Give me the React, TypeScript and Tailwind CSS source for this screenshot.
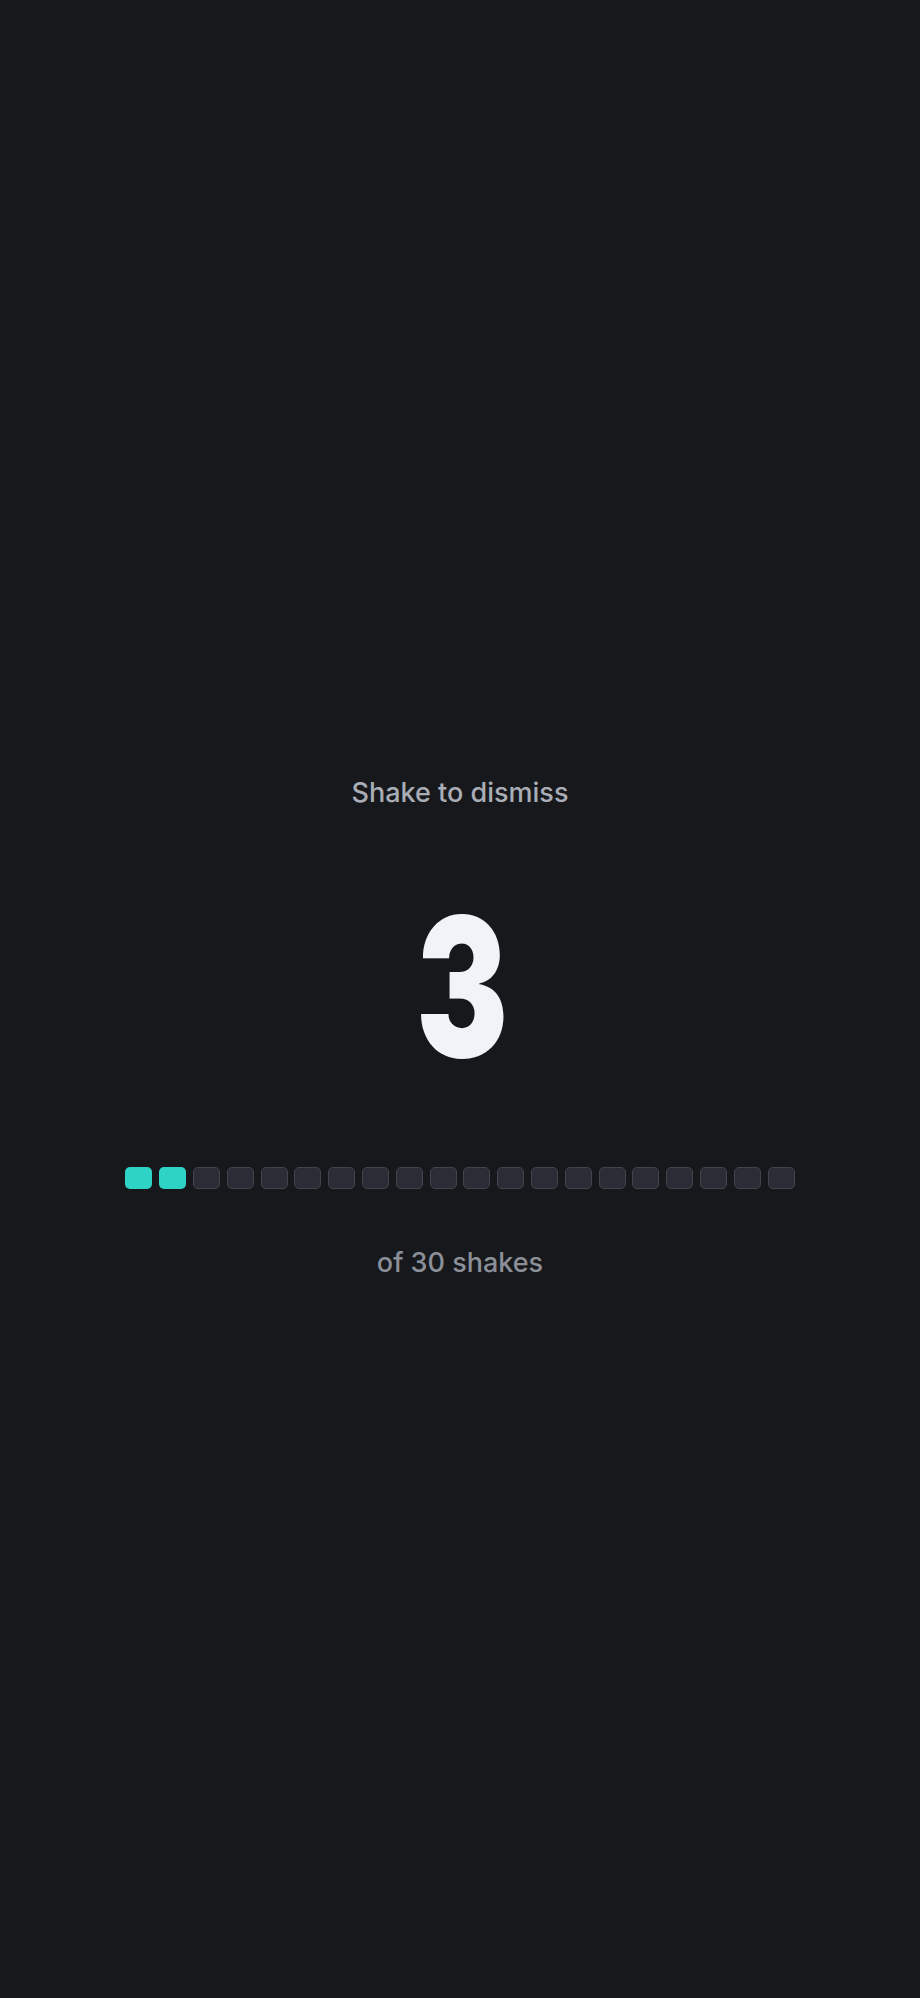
const TOTAL = 20;
const FILLED = 2;

export default function App() {
  return (
    <div className="min-h-screen w-full bg-[#17181c] flex flex-col items-center font-['Inter','Noto_Sans',sans-serif]">
      <div className="h-[772px]" />
      <p className="text-[27px] leading-[42px] font-medium text-[#a9adb6]">Shake to dismiss</p>

      <div className="mt-[63px] h-[220px] flex items-center justify-center">
        <span className="block text-[194px] leading-none font-black text-[#f1f3f8] scale-x-[0.71] tracking-tight">
          3
        </span>
      </div>

      <div className="mt-[70px] flex gap-[6.8px]">
        {Array.from({ length: TOTAL }).map((_, i) => (
          <div
            key={i}
            className={
              i < FILLED
                ? 'w-[27px] h-[22px] rounded-[5px] bg-[#2fd3c5]'
                : 'w-[27px] h-[22px] rounded-[5px] bg-[#2a2d35] border-[1.5px] border-[#41444c]'
            }
          />
        ))}
      </div>

      <p className="mt-[55px] text-[27px] leading-[38px] font-medium text-[#8b8f98]">of 30 shakes</p>
    </div>
  );
}
